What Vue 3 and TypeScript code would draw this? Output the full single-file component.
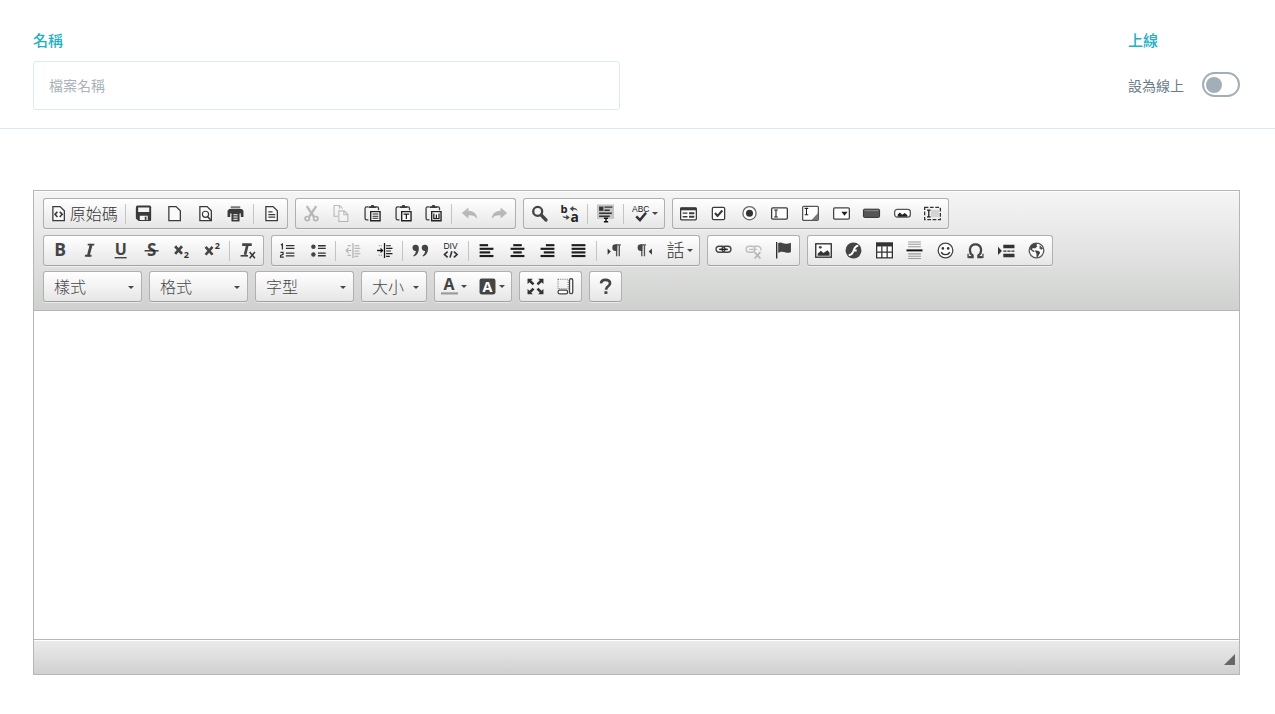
<script setup lang="ts">
import { ref } from 'vue'

interface Item {
  id: string
  label: string
  arrow?: boolean
  disabled?: boolean
  caption?: string
}
interface Group {
  width: number
  items: (Item | null)[]
}

const name = ref('')
const online = ref(false)

const dark = '#3a3a3a'
const doc = `<path d="M2.7 1.5h6.800l4 4v9.200H2.700z" fill="#fafafa" stroke="${dark}" stroke-width="1.200"/>`
const clip = `<path d="M4 1.700H2.600Q1 1.700 1 3.200V12.500q0 1.500 1.500 1.500h1.700M11 1.700h1.200q1.500 0 1.500 1.600V5" fill="none" stroke="${dark}" stroke-width="1.200"/><path d="M4.300 2.900V1.100h2L7-.100h2l.700 1.200h1.800v1.800z" fill="${dark}"/><path d="M6.300 6.200h8.800v8.600H6.300z" fill="#fff" stroke="#222" stroke-width="1.300"/>`
const sans = 'font-family="Open Sans, sans-serif" font-weight="700"'
const small = 'font-family="Liberation Sans, Arial, sans-serif"'
const lines = (rows: [number, number][]) =>
  rows.map(([x, w], i) => `<rect x="${x}" y="${2 + i * 3.4}" width="${w}" height="2" fill="#1c1c1c"/>`).join('')

const icons: Record<string, string> = {
  source: doc + `<path d="M7 6.300 4.700 8.800 7 11.300M9.200 6.300l2.300 2.500-2.300 2.500" fill="none" stroke="${dark}" stroke-width="1.500"/>`,
  save: `<path d="M2.500 .500h11.200Q15.200 .500 15.200 2V14q0 1-1 1H3.400L.800 12.800V2.500Q.800 .500 2.500 .500z" fill="${dark}"/><path d="M3 2.300h10.400v4.300H3zM4.500 10h7.500v4H4.500z" fill="#f4f4f4"/><path d="M9.200 11h1.600v3H9.200z" fill="${dark}"/>`,
  newpage: doc,
  preview: doc + `<circle cx="8" cy="8.800" r="2.900" fill="#fff" stroke="${dark}" stroke-width="1.100"/><path d="m10 11 3.700 3.800" stroke="${dark}" stroke-width="1.500"/>`,
  print: `<path d="M3.500 1.200h9v2h-9z" fill="#777"/><path d="M2 3.800h12L15.500 5.500v5.700H13V8H3v3.200H.500V5.500z" fill="${dark}"/><path d="M4.200 7.200h7.600v8.300H4.200z" fill="${dark}"/><path d="M6 9.200h4M6 11.300h4M6 13.400h4" stroke="#fff"/>`,
  templates: doc + `<path d="M5 6.500h4M5 9h6.500M5 11.500h6.500" stroke="${dark}" stroke-width="1.200"/>`,
  cut: `<path d="m3.500 1 6.700 10M12.500 1 5.800 11" stroke="#333" stroke-width="2.300"/><circle cx="4" cy="12.800" r="2" fill="none" stroke="#333" stroke-width="1.600"/><circle cx="12" cy="12.800" r="2" fill="none" stroke="#333" stroke-width="1.600"/>`,
  copy: `<path d="M4.500 10.500H1v-10h5.200l2.800 2.800M6 .500v3" fill="none" stroke="#333"/><path d="M5.500 5.500h5l3.500 3.500v6.500H5.500zM10.200 5.500v3.700H14" fill="#fff" stroke="#333"/>`,
  paste: clip + `<path d="M8 8.500h5.500M8 10.500h5.500M8 12.500h5.500" stroke="#222"/>`,
  pastetext: clip + `<path d="M8 8.500h5.400M10.700 8.500v4.700" stroke="#222" stroke-width="1.200"/>`,
  pasteword: clip + `<path d="M8.300 8v4.800h4.900V8M10.700 9v3.500" fill="none" stroke="#222" stroke-width="1.200"/>`,
  undo: `<path d="M.800 7.500 7 2.300v3.200c4.500.200 7.800 2.300 8.300 7.500-2-2.700-4.500-3.500-8.300-3.300v3z" fill="#333"/>`,
  redo: `<path d="M15.200 7.500 9 2.300v3.200C4.500 5.700 1.200 7.800.700 13c2-2.700 4.500-3.500 8.300-3.300v3z" fill="#333"/>`,
  find: `<circle cx="6.300" cy="6" r="4.200" fill="none" stroke="#444" stroke-width="2.200"/><path d="m9.700 9.500 4.300 4.500" stroke="#444" stroke-width="3.300" stroke-linecap="round"/>`,
  replace: `<text x="-.500" y="7.500" font-size="10.500" ${sans} font-weight="600" fill="#222">b</text><text x="9" y="16" font-size="13" ${sans} fill="#222">a</text><path d="m11.500 1-3.200 2.500L11.500 6V4.300c2 0 3 .200 4 1.700-.200-2.300-1.500-3.400-4-3.400zM5 9.200l3.300 2.500L5 14.200v-1.700c-2 0-3-.500-3.800-2.300 1 .700 2 .900 3.800.800z" fill="#444"/>`,
  selectall: `<path d="M0-.500h16v13.500H0z" fill="#c4c4c4"/><path d="M2 1.500h4v4H2z" fill="#333"/><path d="M7 2h7.500M7 5h5M2 7.800h12M2 10.600h10" stroke="#333" stroke-width="1.300"/><path d="M6 12.500h5v3.500H6z" fill="#eee"/><path d="M6.500 12.500h4M6.500 15.800h4M8.500 12.500V16" stroke="#111" stroke-width="1.300"/>`,
  spell: `<text x="0" y="6.800" font-size="8" ${small} fill="#222">ABC</text><path d="m4 10.800 3.500 3.400 5.700-7" fill="none" stroke="#333" stroke-width="2.300"/>`,
  form: `<rect x=".600" y="2.600" width="14.800" height="11.300" rx="1" fill="#fff" stroke="${dark}" stroke-width="1.200"/><path d="M.600 2.500h14.800v2.500H.600z" fill="${dark}"/><path d="M2.500 7.700H7M2.500 11H7" stroke="${dark}" stroke-width="1.300"/><path d="M8.500 6.800h5v2h-5zM8.500 10h5v2h-5z" fill="${dark}"/>`,
  checkbox: `<rect x="2.200" y="2.200" width="11.600" height="11.600" rx="1.300" fill="#fff" stroke="${dark}" stroke-width="1.200"/><path d="m4.700 7.500 2.400 2.700 4.500-5" fill="none" stroke="${dark}" stroke-width="2"/>`,
  radio: `<circle cx="8" cy="7.700" r="6.200" fill="#fff" stroke="#666" stroke-width="1.200"/><circle cx="8" cy="7.700" r="3.300" fill="#333"/>`,
  textfield: `<rect x=".600" y="2.800" width="14.800" height="10.400" rx="1" fill="#fff" stroke="${dark}" stroke-width="1.200"/><path d="M3 4.700h3.400M3 11.300h3.400M4.700 4.700v6.600" stroke="#222"/>`,
  textarea: `<rect x=".600" y="1.200" width="14.800" height="13.200" rx="1" fill="#fff" stroke="#555" stroke-width="1.200"/><path d="M2.500 3.200h3.400M2.500 9.200h3.400M4.200 3.200v6" stroke="#222"/><path d="m9 14 6-6.500V14z" fill="#777"/>`,
  select: `<rect x=".600" y="2.800" width="14.800" height="10.400" rx="1" fill="#fff" stroke="#444" stroke-width="1.200"/><path d="M7.800 6.300h6l-3 3.800z" fill="#222"/>`,
  button: `<rect x=".400" y="3.900" width="15.200" height="7.800" rx="1" fill="#555" stroke="#222" stroke-width=".800"/><path d="M1.500 5.300h13" stroke="#888"/>`,
  imagebutton: `<rect x=".600" y="4.200" width="14.800" height="7.200" rx="2.500" fill="#fff" stroke="#555" stroke-width="1.200"/><path d="M3.500 11V9l2-2 2.300 2.200L10 7.500l2.500 2V11z" fill="#222"/>`,
  hidden: `<path d="M6.500 4.500H14v7H6.500z" fill="#d4d4d4"/><rect x=".600" y="2.300" width="14.800" height="11.400" fill="none" stroke="#333" stroke-width="1.200" stroke-dasharray="3.500 1.500"/><path d="M2.800 4.800h3.400M2.800 11.200h3.400M4.500 4.800v6.400" stroke="#222" stroke-width="1.200"/>`,
  bold: `<text x="3" y="13.500" font-size="16.500" ${sans} fill="#444">B</text>`,
  italic: `<path d="M6.300 2.500h6.200M3.700 13h6.200" fill="none" stroke="#444" stroke-width="1.800"/><path d="M9.700 2 6.700 13.500" stroke="#444" stroke-width="2.600"/>`,
  underline: `<text x="2.600" y="11.800" font-size="15" ${sans} fill="#444">U</text><path d="M2.500 14.800h11.300" stroke="#333" stroke-width="1.200"/>`,
  strike: `<text x="3.700" y="13.500" font-size="16" ${sans} fill="#444">S</text><path d="M1.500 8.300h13.200" stroke="#222" stroke-width="1.200"/>`,
  sub: `<path d="m2 4 6.500 7.200M8.500 4 2 11.200" stroke="#444" stroke-width="2.500"/><text x="10" y="15" font-size="8.500" ${sans} fill="#333">2</text>`,
  sup: `<path d="m1.500 4.500 6.500 7.500M8 4.500 1.500 12" stroke="#444" stroke-width="2.500"/><text x="10" y="7" font-size="8.500" ${sans} fill="#333">2</text>`,
  removeformat: `<path d="M3 2.400h9M8 2.400 5.700 12" stroke="#444" stroke-width="2.500" fill="none"/><path d="M1.500 13h7" stroke="#333" stroke-width="1.400"/><path d="m10 9.500 5 5.700m0-5.700-5 5.700" stroke="#333" stroke-width="1.400"/>`,
  numbered: `<path d="M1.800 2.700 3.200 2v5M1.300 9.700h2.500v2l-2.300 1v1.600h3" fill="none" stroke="#333" stroke-width="1.200"/><path d="M6.500 3.500h8M6.500 6h8M6.500 10.500h8M6.500 13h8" stroke="#333" stroke-width="1.200"/>`,
  bulleted: `<circle cx="3.200" cy="4.500" r="2.100" fill="#444"/><circle cx="3.200" cy="11.700" r="2.100" fill="#444"/><path d="M7.500 3.500h7.300M7.500 6h7.300M7.500 10.500h7.300M7.500 13h7.300" stroke="#333" stroke-width="1.300"/>`,
  outdent: `<path d="M7.500 1v14" stroke="#222" stroke-width="1.200"/><path d="M9 3.500h4.500M9 6h6M9 8.500h4.500M9 11h6M9 13.500h3.500M2.500 3.500h3M2.500 12.500h3" stroke="#333" stroke-width="1.200" stroke-dasharray="5 .700"/><path d="M6 8H1M3.500 5.500 1 8l2.500 2.500" fill="none" stroke="#222"/>`,
  indent: `<path d="M8 1v14" stroke="#111" stroke-width="1.200"/><path d="M9.500 3.500H14M9.500 6h6M9.500 8.500H14M9.500 11h6M9.500 13.500H13" stroke="#222" stroke-width="1.100"/><path d="M2.500 3.500h4M2.500 12.500h4" stroke="#888" stroke-dasharray="1 1"/><path d="M1 8h5" stroke="#111" stroke-width="1.300"/><path d="m4.300 5.500 2.700 2.500-2.700 2.500z" fill="#111"/>`,
  quote: `<path d="M.500 5.700a2.900 2.900 0 1 1 5.900-.500c.300 4-1.500 7.300-4.700 8.500l-.500-.900c1.500-1 2.400-2.700 2.400-4.400C2 8.700.500 7.500.500 5.700zM9.200 5.700a2.900 2.900 0 1 1 5.900-.500c.300 4-1.500 7.300-4.700 8.500l-.500-.900c1.500-1 2.400-2.700 2.400-4.400-1.600.300-3.100-.900-3.100-2.700z" fill="#444"/>`,
  div: `<text x="1.300" y="6.700" font-size="8" ${small} fill="#222">DIV</text><path d="M5.300 9 2.300 11.700l3 2.700M11.200 9l3 2.700-3 2.700M9.300 8.700l-1.800 6" fill="none" stroke="#333" stroke-width="1.500"/>`,
  left: lines([[1.5, 8], [1.5, 13], [1.5, 10], [1.5, 13]]),
  center: lines([[4, 8], [1.5, 13], [4, 8], [1.5, 13]]),
  right: lines([[6.5, 8], [1.5, 13], [4.5, 10], [1.5, 13]]),
  justify: lines([[1.5, 13], [1.5, 13], [1.5, 13], [1.5, 13]]),
  ltr: `<path d="m1.500 6 3 3-3 3z" fill="#333"/><path d="M14 2.700H9.500M10 3v10.500M12.500 3v10.500" fill="none" stroke="#555" stroke-width="1.300"/><path d="M10.500 2.200H9a3 3 0 0 0 0 6.200h1.500z" fill="#444"/>`,
  rtl: `<path d="m14 6-3 3 3 3z" fill="#333"/><path d="M8.500 2.700H4M4.500 3v10.500M7 3v10.500" fill="none" stroke="#555" stroke-width="1.300"/><path d="M5 2.200H3.700a3 3 0 0 0 0 6.200H5z" fill="#444"/>`,
  language: `<text x="-.500" y="14" font-size="17" font-family="Noto Sans CJK TC, sans-serif" fill="#333">話</text>`,
  link: `<rect x="1" y="4" width="8.300" height="5.700" rx="2.800" fill="none" stroke="#444" stroke-width="1.300"/><rect x="6.700" y="4" width="8.300" height="5.700" rx="2.800" fill="none" stroke="#444" stroke-width="1.300"/><path d="M4 6.900h8" stroke="#222" stroke-width="1.400"/>`,
  unlink: `<rect x="1" y="4" width="8.300" height="5.700" rx="2.800" fill="none" stroke="#444" stroke-width="1.300"/><path d="M8.500 4h3.500a2.900 2.900 0 0 1 2.800 4M4 6.900h7" fill="none" stroke="#444" stroke-width="1.300"/><path d="m9 9.500 5.500 6m0-6-5.500 6" stroke="#333" stroke-width="1.600"/>`,
  anchor: `<path d="M1.600 0v15.500" stroke="#222" stroke-width="1.200"/><path d="M3 1c3-1.500 4.500.700 7 .700 2 0 3.500-.500 5-1v8.600c-2 1-3.500 1-5.500.300-2.500-.800-4-.800-6.500.600z" fill="#444"/>`,
  image: `<rect x=".700" y="1.700" width="14.600" height="12.600" fill="#fff" stroke="#333" stroke-width="1.300"/><path d="M2.500 13V11L5.500 8.300l2.500 2 3.700-2.500 2 2.200v3z" fill="#333"/><circle cx="5" cy="5" r="1.300" fill="#444"/>`,
  flash: `<circle cx="8" cy="8" r="7.500" fill="#444"/><path d="M12.500 3.500C8.700 3.500 8.800 7 7.500 9.500 6.700 11.500 5.500 12.300 3.500 12.500M7.500 8h3.500" fill="none" stroke="#fff" stroke-width="1.800"/>`,
  table: `<rect x=".600" y="1.100" width="14.800" height="13.800" fill="#fff" stroke="#333" stroke-width="1.200"/><path d="M0 .500h16v3.700H0z" fill="#333"/><path d="M5.500 4v11M10.500 4v11M.500 9.500h15" stroke="#333" stroke-width="1.200"/>`,
  rule: `<path d="M2 0h12M2 2.200h12M2 4.400h12M2 11.200h12M2 13.400h12M2 15.600h12" stroke="#999"/><path d="M.500 7.900h15" stroke="#111" stroke-width="1.800"/>`,
  smiley: `<circle cx="8" cy="8" r="6.900" fill="#fff" stroke="#444" stroke-width="1.200"/><circle cx="5.500" cy="6" r="1.200" fill="#333"/><circle cx="10.500" cy="6" r="1.200" fill="#333"/><path d="M4 9.500c1.700 3.200 6.300 3.200 8 0" fill="none" stroke="#333" stroke-width="1.300"/>`,
  special: `<path d="M1.300 14.200h4V12.600C1.500 10.200 1.700 2.200 8 2.200s6.500 8 2.700 10.400v1.600h4" fill="none" stroke="#444" stroke-width="2.100"/><path d="M1 11v4M15 11v4" stroke="#444" stroke-width="1.200"/>`,
  pagebreak: `<path d="m0 4.500 3.700 3.900L0 12.300z" fill="#333"/><path d="M5 2.500h10.500v3.400H5zM5 11h10.500v3.400H5z" fill="#333"/><path d="M5 8.500h10.500" stroke="#333" stroke-width="1.200" stroke-dasharray="3 .800"/>`,
  iframe: `<circle cx="8" cy="8" r="6.900" fill="#fff" stroke="#555" stroke-width="1.200"/><path d="M2 4.500C4 1.700 6.500 1.200 8.500 1.700L8 3.500l1 .500-2.500 2L4.500 5.700 3.800 7 6.500 8.700 5 9.500 2 7z" fill="#444"/><path d="m6.300 7.800 4 .700 1.200 1.500L9 14.300H8L8 11z" fill="#444"/><path d="m11 3 3.300 3-1.500 1.300-2-1z" fill="#555"/>`,
  textcolor: `<text x="2.300" y="11.700" font-size="15" ${sans} fill="#444">A</text><path d="M0 13.500h16v2H0z" fill="#999"/>`,
  bgcolor: `<rect x=".500" y=".500" width="15" height="15" rx="2" fill="#444"/><text x="3.200" y="13" font-size="13.500" ${sans} fill="#fff">A</text>`,
  maximize: `<path d="M.500.700h5L4 2.200l3 3-1.700 1.700-3-3L.500 5.700zM15.500.700h-5L12 2.200l-3 3 1.700 1.700 3-3 1.800 1.800zM.500 15.300h5L4 13.800l3-3-1.700-1.700-3 3-1.800-1.800zM15.500 15.300h-5l1.500-1.500-3-3 1.700-1.700 3 3 1.800-1.800z" fill="#333"/>`,
  blocks: `<path d="M1 1.200h9.500v9H1z" fill="none" stroke="#777" stroke-dasharray="1 1"/><rect x="11.800" y=".700" width="3" height="14" rx="1.300" fill="#fff" stroke="#444" stroke-width="1.200"/><rect x="1" y="11.500" width="9" height="3.400" rx="1.600" fill="#fff" stroke="#444" stroke-width="1.200"/>`,
  about: `<path d="M3.800 5C4 .800 12.300.600 12.300 5c0 3-3.800 2.600-3.800 6" fill="none" stroke="#444" stroke-width="2.500"/><path d="M7 12.500h2.800V15H7z" fill="#444"/>`
}

const b = (id: string, label: string, extra: Partial<Item> = {}): Item => ({ id, label, ...extra })

const rowOne: Group[] = [
  { width: 245, items: [b('source', '原始碼', { caption: '原始碼' }), null, b('save', '儲存'), b('newpage', '新增網頁'), b('preview', '預覽'), b('print', '列印'), null, b('templates', '範本')] },
  { width: 221, items: [b('cut', '剪下', { disabled: true }), b('copy', '複製', { disabled: true }), b('paste', '貼上'), b('pastetext', '貼成純文字'), b('pasteword', '自 Word 貼上'), null, b('undo', '復原', { disabled: true }), b('redo', '取消復原', { disabled: true })] },
  { width: 142, items: [b('find', '尋找'), b('replace', '取代'), null, b('selectall', '全選'), null, b('spell', '拼字檢查', { arrow: true })] },
  { width: 277, items: [b('form', '表單'), b('checkbox', '核取方塊'), b('radio', '選項按鈕'), b('textfield', '文字欄位'), b('textarea', '文字區域'), b('select', '選取欄位'), b('button', '按鈕'), b('imagebutton', '影像按鈕'), b('hidden', '隱藏欄位')] }
]
const rowTwo: Group[] = [
  { width: 221, items: [b('bold', '粗體'), b('italic', '斜體'), b('underline', '底線'), b('strike', '刪除線'), b('sub', '下標'), b('sup', '上標'), null, b('removeformat', '移除格式')] },
  { width: 429, items: [b('numbered', '編號清單'), b('bulleted', '項目符號'), null, b('outdent', '減少縮排', { disabled: true }), b('indent', '增加縮排'), null, b('quote', '引用段落'), b('div', '建立 DIV'), null, b('left', '靠左對齊'), b('center', '置中'), b('right', '靠右對齊'), b('justify', '左右對齊'), null, b('ltr', '由左至右'), b('rtl', '由右至左'), b('language', '語言', { arrow: true })] },
  { width: 93, items: [b('link', '連結'), b('unlink', '取消連結', { disabled: true }), b('anchor', '錨點')] },
  { width: 246, items: [b('image', '影像'), b('flash', 'Flash'), b('table', '表格'), b('rule', '水平線'), b('smiley', '表情符號'), b('special', '特殊字元'), b('pagebreak', '分頁符號'), b('iframe', 'IFrame')] }
]
const rowThree: Group[] = [
  { width: 78, items: [b('textcolor', '文字顏色', { arrow: true }), b('bgcolor', '背景顏色', { arrow: true })] },
  { width: 63, items: [b('maximize', '最大化'), b('blocks', '顯示區塊')] },
  { width: 33, items: [b('about', '關於')] }
]
const rows = [
  { combos: [] as { label: string; narrow: boolean }[], groups: rowOne },
  { combos: [], groups: rowTwo },
  {
    combos: [
      { label: '樣式', narrow: false },
      { label: '格式', narrow: false },
      { label: '字型', narrow: false },
      { label: '大小', narrow: true }
    ],
    groups: rowThree
  }
]
</script>

<template>
  <main class="page">
    <header class="head">
      <div class="field">
        <label class="title" for="file-name">名稱</label>
        <input id="file-name" v-model="name" class="name" type="text" placeholder="檔案名稱" />
      </div>
      <div class="status">
        <div class="status-body">
          <span class="title">上線</span>
          <label class="toggle">
            <span>設為線上</span>
            <input v-model="online" class="switch" type="checkbox" role="switch" />
          </label>
        </div>
      </div>
    </header>

    <section class="editor">
      <div class="toolbar" role="toolbar" aria-label="編輯器工具列">
        <div v-for="(row, r) in rows" :key="r" class="row">
          <div v-for="c in row.combos" :key="c.label" class="combo" :class="{ narrow: c.narrow }">
            <select :aria-label="c.label"><option>{{ c.label }}</option></select>
            <i class="caret"></i>
          </div>
          <div v-for="(g, i) in row.groups" :key="i" class="group" :style="{ width: g.width + 'px' }">
            <template v-for="(item, k) in g.items" :key="k">
              <button
                v-if="item"
                type="button"
                class="tool"
                :class="{ arrowed: item.arrow, captioned: item.caption }"
                :disabled="item.disabled"
                :aria-label="item.label"
              >
                <svg class="icon" viewBox="0 0 16 16" aria-hidden="true" v-html="icons[item.id]"></svg>
                <span v-if="item.caption">{{ item.caption }}</span>
                <i v-if="item.arrow" class="caret"></i>
              </button>
              <span v-else class="separator"></span>
            </template>
          </div>
        </div>
      </div>
      <div class="content" contenteditable="true" role="textbox" aria-label="內容"></div>
      <footer class="bottom">
        <svg class="resizer" viewBox="0 0 11 11" aria-hidden="true"><path d="M11 0v11H0z" fill="#666" /></svg>
      </footer>
    </section>
  </main>
</template>

<style>
body {
  margin: 0;
  background: #fff;
}
</style>

<style scoped>
.page {
  font-family: "Open Sans", "Noto Sans CJK TC", sans-serif;
  color: #6b7c88;
}
.page * {
  box-sizing: border-box;
}
.head {
  display: grid;
  grid-template-columns: 1fr 1fr;
  gap: 33px;
  padding: 29px 35px 18px 33px;
  border-bottom: 1px solid #d9ebf6;
}
.title {
  display: block;
  margin-bottom: 10px;
  font-size: 15px;
  line-height: 22px;
  font-weight: 500;
  color: #1fb0c4;
}
.name {
  display: block;
  width: 100%;
  height: 49px;
  padding: 0 15px;
  border: 1px solid #dcebf0;
  border-radius: 3px;
  background: #fff;
  font: inherit;
  font-size: 14px;
  color: #6b7c88;
  outline: none;
}
.name::placeholder {
  color: #a9b3b9;
  opacity: 1;
}
.status {
  display: flex;
  justify-content: flex-end;
}
.status-body {
  width: 112px;
}
.toggle {
  display: flex;
  align-items: center;
  justify-content: space-between;
  height: 47px;
  font-size: 14px;
}
.switch {
  appearance: none;
  display: flex;
  align-items: center;
  width: 38px;
  height: 25px;
  margin: 0;
  padding: 0 2px;
  border: 2px solid #a2afb7;
  border-radius: 13px;
  background: #fff;
}
.switch::before {
  content: "";
  width: 16px;
  height: 16px;
  border-radius: 50%;
  background: #a2afb7;
}
.switch:checked {
  justify-content: flex-end;
  border-color: #1ba9bd;
}
.editor {
  margin: 61px 35px 0 33px;
  border: 1px solid #b6b6b6;
}
.toolbar {
  display: grid;
  align-content: space-between;
  min-height: 120px;
  padding: 7px 9px 8px;
  border-bottom: 1px solid #b6b6b6;
  background: linear-gradient(#f5f5f5, #cfd1cf);
  box-shadow: inset 0 1px 0 #fff;
}
.row {
  display: flex;
  gap: 7px;
}
.group,
.combo {
  display: flex;
  height: 31px;
  border: 1px solid #b0b0b0;
  border-bottom-color: #a3a3a3;
  border-radius: 3px;
  background: linear-gradient(#fff, #e6e6e6);
  box-shadow: 0 1px 0 rgba(255, 255, 255, 0.5);
}
.tool {
  display: flex;
  flex: 31 1 0;
  align-items: center;
  justify-content: center;
  gap: 3px;
  min-width: 0;
  padding: 0;
  border: 0;
  background: none;
  font-family: inherit;
  font-size: 16px;
  font-weight: 300;
  line-height: 24px;
  color: #333;
  white-space: nowrap;
}
.arrowed {
  flex-grow: 39;
}
.captioned {
  flex-grow: 80;
}
.tool:disabled .icon {
  opacity: 0.3;
}
.icon {
  flex: none;
  width: 17px;
  height: 17px;
  overflow: visible;
}
.separator {
  flex: none;
  width: 1px;
  margin: 5px 2px 4px;
  background: #c4c4c4;
}
.caret {
  flex: none;
  width: 0;
  height: 0;
  border: 3px solid transparent;
  border-top-color: #474747;
  border-bottom: 0;
}
.combo {
  position: relative;
  width: 99px;
}
.combo.narrow {
  width: 66px;
}
.combo select {
  appearance: none;
  width: 100%;
  padding: 0 20px 0 10px;
  border: 0;
  background: none;
  font-family: inherit;
  font-size: 16px;
  font-weight: 300;
  color: #474747;
  outline: none;
}
.combo .caret {
  position: absolute;
  right: 7px;
  top: 14px;
  pointer-events: none;
}
.content {
  min-height: 328px;
  background: #fff;
  outline: none;
}
.bottom {
  display: flex;
  align-items: flex-end;
  justify-content: flex-end;
  height: 35px;
  padding: 0 4px 9px;
  border-top: 1px solid #b6b6b6;
  background: linear-gradient(#ebebeb, #cfd1cf);
  box-shadow: inset 0 1px 0 #fff;
}
.resizer {
  width: 11px;
  height: 11px;
}
</style>
